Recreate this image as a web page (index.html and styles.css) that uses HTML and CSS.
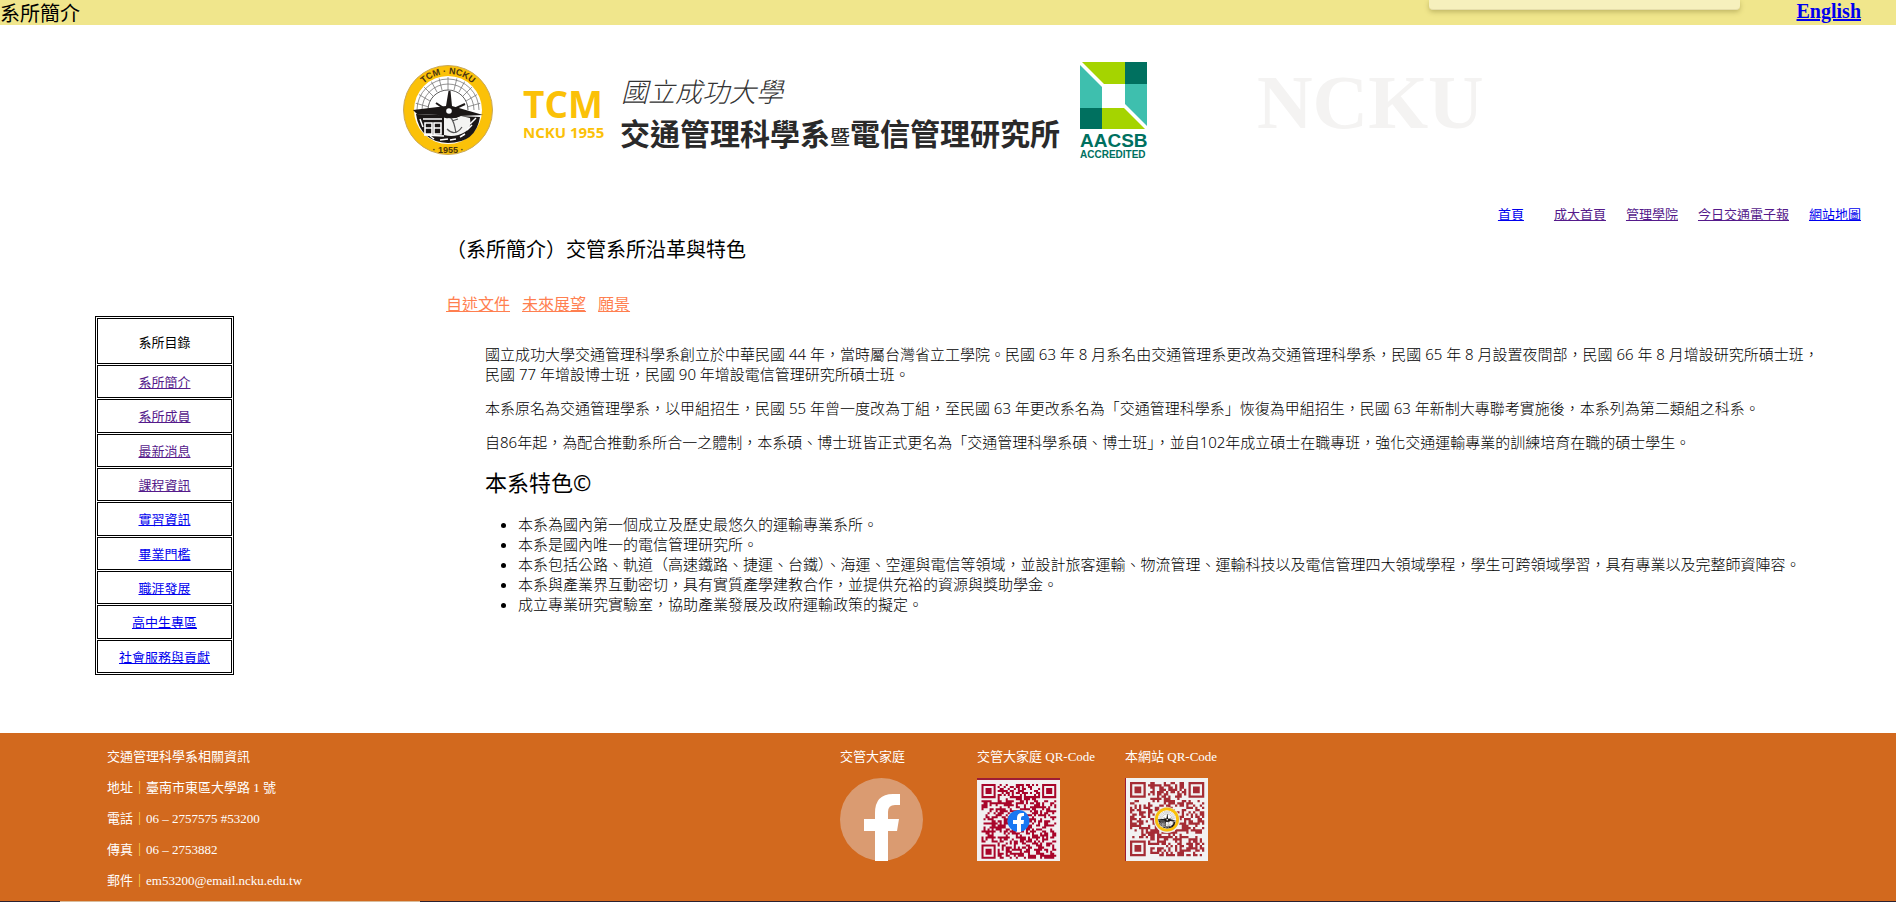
FILE: index.html
```html
<!DOCTYPE html>
<html lang="zh-TW">
<head>
<meta charset="utf-8">
<title>系所簡介</title>
<link rel="stylesheet" href="styles.css">
</head>
<body>
<header class="topbar">
  <span class="topbar-title">系所簡介</span>
  <a class="topbar-lang" href="#en">English</a>
  <div class="popup"></div>
</header>

<div class="banner">
  <svg class="banner-art" viewBox="0 0 1100 102" width="1100" height="102" role="img" aria-label="國立成功大學 交通管理科學系暨電信管理研究所">
    <defs>
      <path id="arc-top" d="M12 50A36 36 0 0 1 84 50"/>
      <clipPath id="dial"><circle cx="48" cy="50" r="33"/></clipPath>
      <g id="emblem">
        <circle cx="48" cy="50" r="44.5" fill="#fbc108" stroke="#c9a85a" stroke-width="1"/>
        <circle cx="48" cy="50" r="34" fill="#fff"/>
        <g fill="none" stroke="#777" stroke-width="0.8" clip-path="url(#dial)">
          <path d="M17 50a31 31 0 0 1 62 0M22 50a26 26 0 0 1 52 0"/>
          <path d="M28 50a20 20 0 0 1 40 0" stroke="#333"/>
          <path d="M48 17v13M39 18l3 12M31 21l6 11M24 27l9 9M18 34l12 7M15 43l14 4M57 18l-3 12M65 21l-6 11M72 27l-9 9M78 34l-12 7M81 43l-14 4"/>
        </g>
        <path d="M16 54L80 57Q76 83 48 83Q20 82 16 54z" fill="#1b1716"/>
        <path d="M44 57q9 3 17-1l9 2q2 10-5 14q-10 6-21 3z" fill="#f4f4f2"/>
        <path d="M13 50L46 46L48.500 31L50.500 31L52 46L83 55L60 56Q55 59 49 58Q43 59 38 55L17 54z" fill="#1b1716"/>
        <path d="M36 43L45 49M65 44L54 49" stroke="#1b1716" stroke-width="2"/>
        <circle cx="49" cy="51" r="2.800" fill="#fff"/>
        <path d="M23 59h19M25 63v11h7v-11zM34 63v11h7v-11zM25 68h7M34 68h7M24 75l20 1" fill="none" stroke="#fff" stroke-width="1.600"/>
        <path d="M51 58q3 3 5 15M47 69q8 8 15-2M52 61l6-2" fill="none" stroke="#555" stroke-width="1.200"/>
        <path d="M70 64l6-6M67 70l5-5M60 77l5-3M40 80l8-1M50 80l6-1M20 59l3 8M30 76l4 3" stroke="#fff" stroke-width="1.500"/>
      </g>
    </defs>
    <use href="#emblem"/>
    <text class="emblem-text"><textPath href="#arc-top" startOffset="50%" text-anchor="middle">TCM · NCKU</textPath></text>
    <text class="emblem-text" x="48" y="93" text-anchor="middle">· 1955 ·</text>
    <text class="tcm" x="123" y="58">TCM</text>
    <text class="tcm-sub" x="123" y="78">NCKU 1955</text>
    <text class="script" x="221" y="42">國立成功大學</text>
    <text class="dept" x="220" y="85">交通管理科學系<tspan class="dept-and">暨</tspan>電信管理研究所</text>
    <g>
      <path d="M682 2h43v22h-21z" fill="#a5d400"/>
      <path d="M725 2h22v22h-22z" fill="#00705f"/>
      <path d="M680 5l22 22v21h-22z" fill="#3ebfae"/>
      <path d="M680 48h22v21h-22z" fill="#00705f"/>
      <path d="M702 48h22l21 21h-43z" fill="#a5d400"/>
      <path d="M725 24h22v42l-22-22z" fill="#3ebfae"/>
      <text class="aacsb" x="680" y="87">AACSB</text>
      <text class="aacsb-sub" x="680" y="98">ACCREDITED</text>
    </g>
    <text class="ghost" x="857" y="68">NCKU</text>
  </svg>
</div>

<nav class="links">
  <a class="first" href="#home">首頁</a>
  <a class="seen" href="#ncku">成大首頁</a>
  <a class="seen" href="#cm">管理學院</a>
  <a class="seen" href="#news">今日交通電子報</a>
  <a href="#map">網站地圖</a>
</nav>

<div class="page">
  <aside class="side">
    <table class="menu">
      <thead><tr><th>系所目錄</th></tr></thead>
      <tbody>
        <tr><td><a class="seen" href="#m1">系所簡介</a></td></tr>
        <tr><td><a class="seen" href="#m2">系所成員</a></td></tr>
        <tr><td><a class="seen" href="#m3">最新消息</a></td></tr>
        <tr><td><a class="seen" href="#m4">課程資訊</a></td></tr>
        <tr><td><a href="#m5">實習資訊</a></td></tr>
        <tr><td><a href="#m6">畢業門檻</a></td></tr>
        <tr><td><a href="#m7">職涯發展</a></td></tr>
        <tr><td><a href="#m8">高中生專區</a></td></tr>
        <tr><td><a href="#m9">社會服務與貢獻</a></td></tr>
      </tbody>
    </table>
  </aside>
  <main class="content">
    <h1>（系所簡介）交管系所沿革與特色</h1>
    <div class="tabs">
      <a href="#t1">自述文件</a>
      <a href="#t2">未來展望</a>
      <a href="#t3">願景</a>
    </div>
    <article class="article">
      <p>國立成功大學交通管理科學系創立於中華民國 44 年，當時屬台灣省立工學院。民國 63 年 8 月系名由交通管理系更改為交通管理科學系，民國 65 年 8 月設置夜間部，民國 66 年 8 月增設研究所碩士班，<br>民國 77 年增設博士班，民國 90 年增設電信管理研究所碩士班。</p>
      <p>本系原名為交通管理學系，以甲組招生，民國 55 年曾一度改為丁組，至民國 63 年更改系名為「交通管理科學系」恢復為甲組招生，民國 63 年新制大專聯考實施後，本系列為第二類組之科系。</p>
      <p>自86年起，為配合推動系所合一之體制，本系碩、博士班皆正式更名為「交通管理科學系碩、博士班」，並自102年成立碩士在職專班，強化交通運輸專業的訓練培育在職的碩士學生。</p>
      <h2>本系特色©</h2>
      <ul>
        <li>本系為國內第一個成立及歷史最悠久的運輸專業系所。</li>
        <li>本系是國內唯一的電信管理研究所。</li>
        <li>本系包括公路、軌道（高速鐵路、捷運、台鐵）、海運、空運與電信等領域，並設計旅客運輸、物流管理、運輸科技以及電信管理四大領域學程，學生可跨領域學習，具有專業以及完整師資陣容。</li>
        <li>本系與產業界互動密切，具有實質產學建教合作，並提供充裕的資源與獎助學金。</li>
        <li>成立專業研究實驗室，協助產業發展及政府運輸政策的擬定。</li>
      </ul>
    </article>
  </main>
</div>

<footer class="footer">
  <div class="contact">
    <p>交通管理科學系相關資訊</p>
    <p>地址<span class="bar">｜</span>臺南市東區大學路 1 號</p>
    <p>電話<span class="bar">｜</span>06 – 2757575 #53200</p>
    <p>傳真<span class="bar">｜</span>06 – 2753882</p>
    <p>郵件<span class="bar">｜</span>em53200@email.ncku.edu.tw</p>
  </div>
  <div class="social">
    <p>交管大家庭</p>
    <a href="#fb" aria-label="Facebook">
      <svg class="tile" viewBox="0 0 83 83">
        <circle cx="41.500" cy="41.500" r="41.500" fill="#da9b71"/>
        <path d="M35 83V53H24V41H35V35Q35 16 53 16H60V27H55Q48 27 48 34V41H59L57 53H48V83z" fill="#fff"/>
      </svg>
    </a>
  </div>
  <div class="social">
    <p>交管大家庭 QR-Code</p>
    <svg class="tile" viewBox="0 0 83 83" role="img" aria-label="交管大家庭 QR-Code">
      <path d="M0 0h83v83h-83z" fill="#f2f0f1"/>
      <path d="M0 0h83v2h-83z" fill="#9c1c35"/>
      <path class="qr qr-red" data-size="37" data-seed="7" transform="translate(4.500 6) scale(2.020)"/>
      <circle cx="41.500" cy="43" r="11" fill="#1877f2"/>
      <path d="M40 54v-8h-4v-4h4v-2q0-5 5-5h2v3h-1q-2 0-2 2v2h3l-.500 4h-2.500v8z" fill="#fff"/>
    </svg>
  </div>
  <div class="social">
    <p>本網站 QR-Code</p>
    <svg class="tile" viewBox="0 0 83 83" role="img" aria-label="本網站 QR-Code">
      <path d="M0 0h83v83h-83z" fill="#f2f2f2"/>
      <path d="M0 0h1v83h-1z" fill="#9c1c35"/>
      <path class="qr qr-brown" data-size="33" data-seed="23" transform="translate(5 4) scale(2.250)"/>
      <circle cx="42" cy="42" r="13" fill="#f2f2f2"/>
      <use href="#emblem" transform="translate(29 28) scale(0.270)"/>
    </svg>
  </div>
</footer>
<div class="edge"></div>
<script src="qr.js"></script>
</body>
</html>
```
FILE: styles.css
```css
* { box-sizing: border-box; }
body {
  margin: 0;
  background: #fff;
  color: #000;
  font-family: "Liberation Serif", "Noto Sans CJK TC", serif;
  font-size: 13px;
}
a { color: #0000ee; }
a.seen { color: #551a8b; }
p, h1, h2, ul { margin: 0; }

.topbar {
  position: relative;
  display: flex;
  justify-content: space-between;
  align-items: flex-start;
  height: 25px;
  padding-right: 35px;
  background: #f0e68c;
}
.topbar-title { padding-top: 3px; font-size: 20px; line-height: 22px; }
.topbar-lang { font-size: 20px; line-height: 22px; font-weight: bold; }
.popup {
  position: absolute;
  top: 0;
  right: 156px;
  width: 311px;
  height: 10px;
  background: #f6f0bd;
  border-bottom: 1px solid #e6deac;
  border-radius: 0 0 4px 4px;
  box-shadow: 0 2px 5px rgba(120, 110, 40, 0.4);
}

.banner { padding: 35px 0 0 400px; }
.banner-art { display: block; }
.emblem-text { font: bold 9px "Liberation Sans", sans-serif; fill: #4a3410; }
.tcm { font: bold 37px "Open Sans", sans-serif; fill: #fbc108; }
.tcm-sub { font: bold 15px "Open Sans", sans-serif; fill: #fbc108; }
.script { font: italic 300 27px "Noto Sans CJK TC", sans-serif; fill: #333; }
.dept { font: bold 30px "Noto Sans CJK TC", sans-serif; fill: #2a2a2a; }
.dept-and { font-size: 20px; font-weight: 500; }
.aacsb { font: bold 19px "Liberation Sans", sans-serif; fill: #00705f; }
.aacsb-sub { font: bold 10px "Liberation Sans", sans-serif; fill: #00705f; }
.ghost { font: bold 77px "Liberation Serif", serif; fill: #f4f3f2; }

.links {
  display: flex;
  justify-content: flex-end;
  gap: 20px;
  padding: 43px 35px 0 0;
  line-height: 20px;
}
.links .first { margin-right: 10px; }

.page {
  display: grid;
  grid-template-columns: 446px 1fr;
  padding-bottom: 58px;
}
.side { padding: 91px 0 0 95px; }
.menu {
  width: 139px;
  height: 359px;
  border: 1px solid #000;
  border-spacing: 1px;
  text-align: center;
}
.menu th, .menu td { border: 1px solid #000; padding: 0; }
.menu th { height: 46px; font-weight: 400; }

.content { padding: 10px 35px 0 0; }
h1 { font-size: 20px; line-height: 30px; font-weight: 400; }
.tabs { display: flex; gap: 12px; margin-top: 30px; font-size: 16px; line-height: 20px; }
.tabs a { color: #ff7f50; }
.article {
  padding: 29px 0 0 39px;
  font-family: "Noto Sans", "Noto Sans CJK TC", sans-serif;
  font-size: 15px;
  font-weight: 300;
  line-height: 20px;
}
.article p { margin-bottom: 14px; }
h2 { margin: 14px 0 16px; font-size: 22px; line-height: 32px; font-weight: 400; }
.article ul { padding-left: 33px; }

.footer {
  display: grid;
  grid-template-columns: 733px 137px 148px 1fr;
  padding: 14px 0 10px 107px;
  background: #d2691e;
  color: #fff;
  line-height: 20px;
}
.contact { display: flex; flex-direction: column; gap: 11px; }
.bar { color: #ffe14d; font-weight: 700; }
.social p { margin-bottom: 11px; }
.tile { display: block; width: 83px; height: 83px; }
.qr-red { fill: #a8052a; }
.qr-brown { fill: #a52c35; }
.edge { height: 1px; background: linear-gradient(90deg, #2a2030 60px, #d8bc9c 60px, #d8bc9c 420px, #2a2030 420px); }
```
FILE: qr.js
```javascript
// Fills each .qr path with finder squares and a seeded module pattern.
document.querySelectorAll('.qr').forEach(function (path) {
  var n = +path.dataset.size;
  var state = +path.dataset.seed;
  function random() {
    state = (state * 1103515245 + 12345) % 2147483648;
    return state / 2147483648;
  }
  function finder(x, y) {
    var inner = Math.max(Math.abs(x - 3), Math.abs(y - 3));
    return inner !== 2 && inner < 4;
  }
  var d = '';
  for (var y = 0; y < n; y++) {
    for (var x = 0; x < n; x++) {
      var on = random() > 0.48;
      if (x < 8 && y < 8) on = finder(x, y);
      else if (x > n - 9 && y < 8) on = finder(x - n + 7, y);
      else if (x < 8 && y > n - 9) on = finder(x, y - n + 7);
      if (on) d += 'M' + x + ' ' + y + 'h1v1h-1z';
    }
  }
  path.setAttribute('d', d);
});
```
